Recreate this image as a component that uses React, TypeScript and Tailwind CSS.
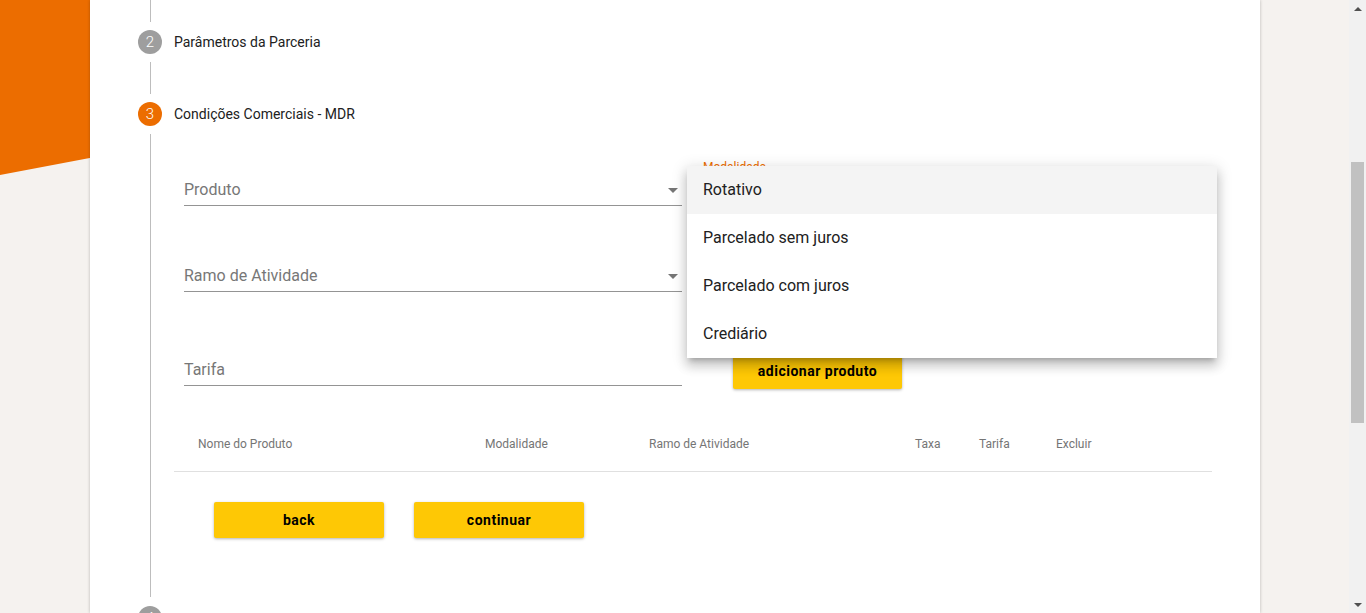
const fieldLine = 'relative flex items-center h-[32px] border-b border-[#949494]';

function ArrowDrop() {
  return (
    <svg viewBox="0 0 24 24" className="w-6 h-6 -mr-[3px] fill-[#757575]">
      <path d="M7 10l5 5 5-5z" />
    </svg>
  );
}

function StepIcon({ n, active }: { n: number; active?: boolean }) {
  return (
    <div
      className={`w-6 h-6 rounded-full flex items-center justify-center text-[15px] font-light text-white ${
        active ? 'bg-[#ec6d00]' : 'bg-[#9e9e9e]'
      }`}
    >
      {n}
    </div>
  );
}

function Scrollbar() {
  return (
    <div className="w-[17px] shrink-0 h-full bg-[#f1f1f1] flex flex-col">
      <div className="h-[17px] flex items-center justify-center">
        <div className="w-0 h-0 border-x-[4px] border-x-transparent border-b-[4px] border-b-[#505050]" />
      </div>
      <div className="flex-1">
        <div className="mt-[145px] mx-[2px] h-[261px] bg-[#c1c1c1]" />
      </div>
      <div className="h-[17px] flex items-center justify-center">
        <div className="w-0 h-0 border-x-[4px] border-x-transparent border-t-[4px] border-t-[#505050]" />
      </div>
    </div>
  );
}

const modalidades = ['Rotativo', 'Parcelado sem juros', 'Parcelado com juros', 'Crediário'];
const columns = ['Nome do Produto', 'Modalidade', 'Ramo de Atividade', 'Taxa', 'Tarifa', 'Excluir'];

export default function App() {
  return (
    <div className="relative flex h-[613px] w-full overflow-hidden bg-[#f5f2ef] font-['Roboto','Liberation_Sans',sans-serif] text-[#212121]">
      {/* orange header shape behind the card */}
      <div className="absolute left-0 top-0 w-[926px] h-[175px] bg-[#ec6d00] [clip-path:polygon(0_0,100%_0,0_100%)]" />

      <div className="w-[90px] shrink-0" />

      <main className="relative z-10 w-[1170px] shrink-0 bg-white pl-[48px] shadow-[0_0_3px_rgba(0,0,0,0.25)]">
        <div className="ml-[12px] h-[22px] border-l border-[#bdbdbd]" />

        {/* Step 2 */}
        <div className="mt-[8px] flex items-center gap-[12px] h-6">
          <StepIcon n={2} />
          <span className="text-[14px]">Parâmetros da Parceria</span>
        </div>

        <div className="mt-[8px] ml-[12px] h-[32px] border-l border-[#bdbdbd]" />

        {/* Step 3 */}
        <div className="mt-[8px] flex items-center gap-[12px] h-6">
          <StepIcon n={3} active />
          <span className="text-[14px]">Condições Comerciais - MDR</span>
        </div>

        <div className="mt-[8px] ml-[12px] h-[463px] border-l border-[#bdbdbd] pl-[23px]">
          <div className="relative pt-[40px] pl-[10px]">
            {/* row 1 */}
            <div className="grid grid-cols-[498px_498px] gap-x-[21px]">
              <div className={fieldLine}>
                <span className="flex-1 text-[16px] text-[#777]">Produto</span>
                <ArrowDrop />
              </div>
              <div className={fieldLine}>
                <span className="absolute left-0 -top-[16px] text-[12px] text-[#ec6d00]">Modalidade</span>
              </div>
            </div>

            {/* row 2 */}
            <div className="mt-[54px] grid grid-cols-[498px_498px] gap-x-[21px]">
              <div className={fieldLine}>
                <span className="flex-1 text-[16px] text-[#777]">Ramo de Atividade</span>
                <ArrowDrop />
              </div>
              <div className={fieldLine} />
            </div>

            {/* row 3 */}
            <div className="mt-[61px] grid grid-cols-[498px_498px] gap-x-[21px] items-start">
              <div className={`${fieldLine} mt-[1px]`}>
                <span className="flex-1 text-[16px] text-[#777]">Tarifa</span>
              </div>
              <div>
                <button className="ml-[30px] w-[169px] h-[36px] rounded-[2px] bg-[#fec805] text-[14px] font-bold tracking-[0.5px] text-black shadow-[0_1px_3px_rgba(0,0,0,0.3)]">
                  adicionar produto
                </button>
              </div>
            </div>

            {/* open Modalidade menu */}
            <div className="absolute left-[513px] top-[32px] w-[530px] bg-white shadow-[0_5px_5px_-3px_rgba(0,0,0,0.2),0_8px_10px_1px_rgba(0,0,0,0.14),0_3px_14px_2px_rgba(0,0,0,0.12)]">
              {modalidades.map((m, i) => (
                <div
                  key={m}
                  className={`h-[48px] flex items-center px-4 text-[16px] text-[#212121] ${i === 0 ? 'bg-[#f4f4f4]' : ''}`}
                >
                  {m}
                </div>
              ))}
            </div>
          </div>

          {/* table header */}
          <div className="mt-[26px] w-[1038px] h-[57px] pt-[2px] grid grid-cols-[287px_164px_266px_64px_77px_1fr] items-center border-b border-[#e0e0e0] text-[12px] text-[#757575]">
            {columns.map(c => (
              <span key={c} className="pl-6">{c}</span>
            ))}
          </div>

          <div className="mt-[30px] ml-[40px] flex gap-[30px]">
            <button className="w-[170px] h-[36px] rounded-[2px] bg-[#fec805] text-[14px] font-bold tracking-[0.5px] text-black shadow-[0_1px_3px_rgba(0,0,0,0.3)]">
              back
            </button>
            <button className="w-[170px] h-[36px] rounded-[2px] bg-[#fec805] text-[14px] font-bold tracking-[0.5px] text-black shadow-[0_1px_3px_rgba(0,0,0,0.3)]">
              continuar
            </button>
          </div>
        </div>

        {/* Step 4 */}
        <div className="mt-[9px] flex items-start gap-[12px] h-6">
          <StepIcon n={4} />
          <span className="pt-[7px] text-[14px] leading-[20px]">Condições Operacionais</span>
        </div>
      </main>

      <div className="flex-1" />
      <Scrollbar />
    </div>
  );
}
